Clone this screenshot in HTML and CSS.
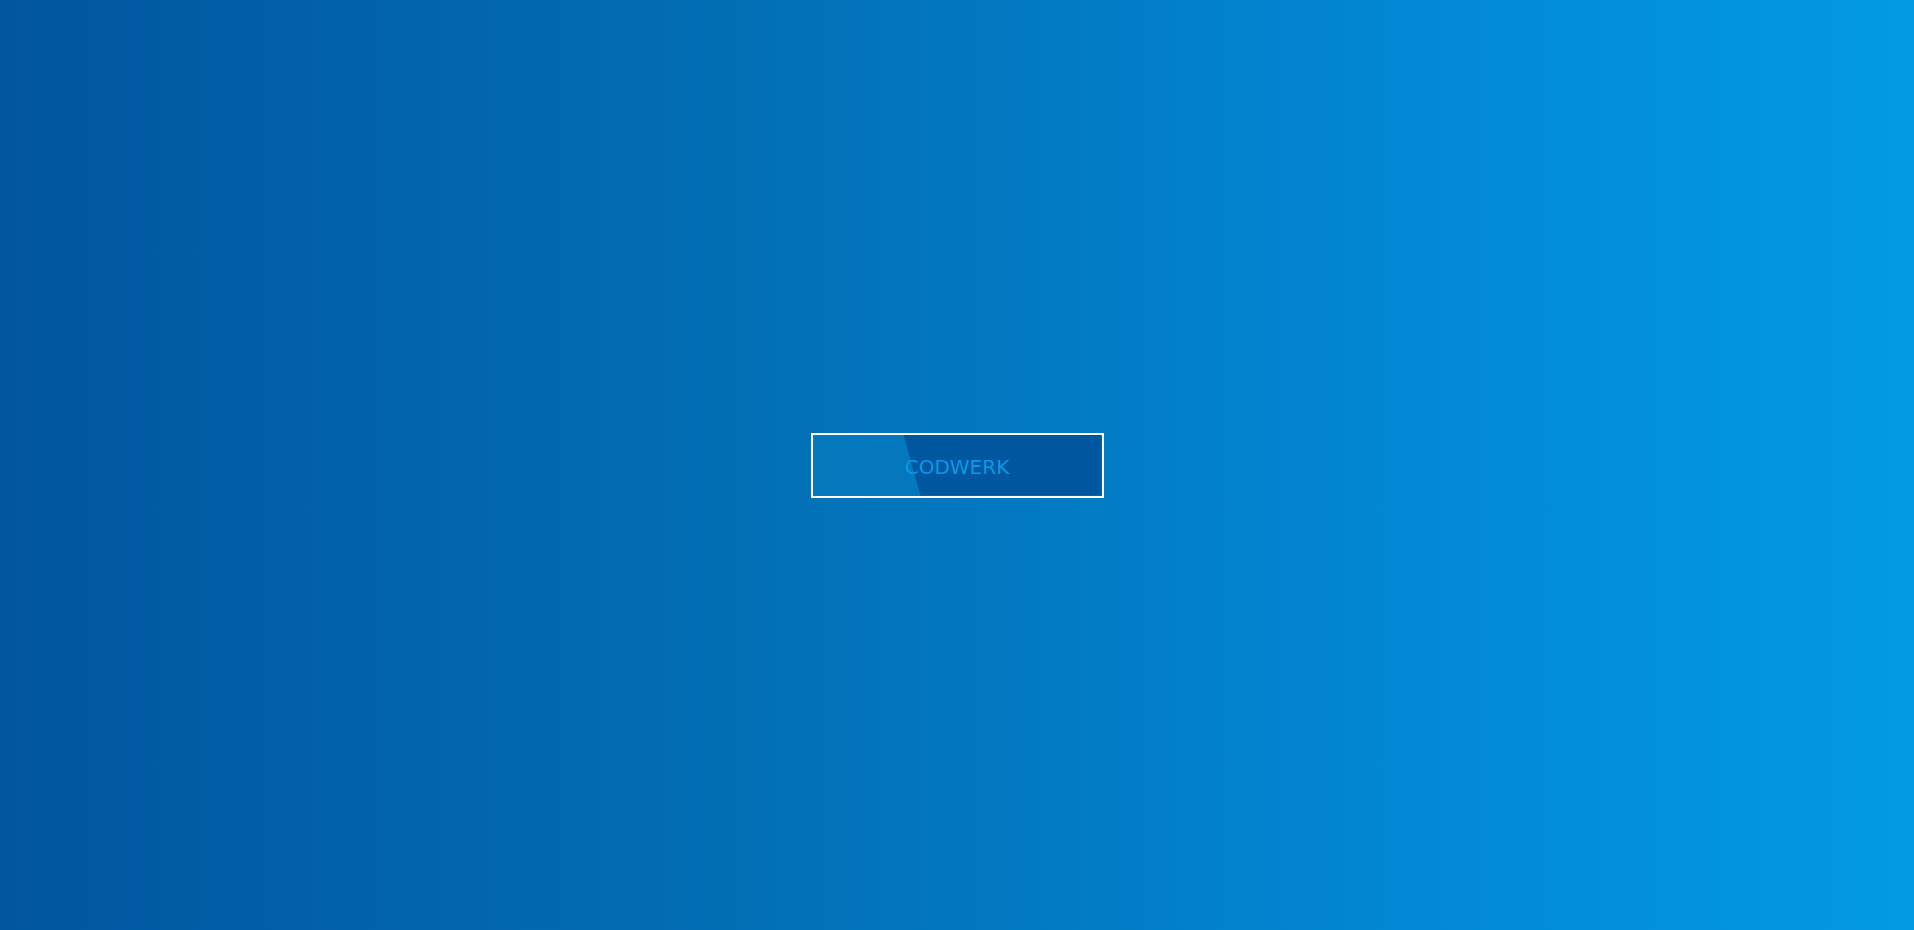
FILE: index.html
```html
<!DOCTYPE html>
<html lang="en">
<head>
<meta charset="utf-8">
<title>Codwerk</title>
<link rel="stylesheet" href="styles.css">
</head>
<body>
<main class="stage">
  <a class="brand-btn" href="#"><span class="brand-label">CODWERK</span></a>
</main>
</body>
</html>
```
FILE: styles.css
```css
html, body {
  margin: 0;
  padding: 0;
  height: 100%;
}
body {
  background: linear-gradient(to right, #01569f 0%, #0270b6 40%, #0289d6 75%, #039ae3 100%);
  font-family: "DejaVu Sans", Verdana, sans-serif;
}
.stage {
  height: 100vh;
  display: flex;
  align-items: center;
  justify-content: center;
}
.brand-btn {
  position: relative;
  box-sizing: border-box;
  width: 293px;
  height: 65px;
  border: 2px solid #ffffff;
  background: #0477bd;
  display: flex;
  align-items: center;
  justify-content: center;
  text-decoration: none;
  overflow: hidden;
}
.brand-btn::before {
  content: "";
  position: absolute;
  inset: 0;
  background: #0156a0;
  clip-path: polygon(91px 0, 100% 0, 100% 100%, 108px 100%);
}
.brand-label {
  position: relative;
  color: #069be6;
  font-size: 20px;
  line-height: 1;
  padding-top: 3px;
  letter-spacing: 0;
}
```
